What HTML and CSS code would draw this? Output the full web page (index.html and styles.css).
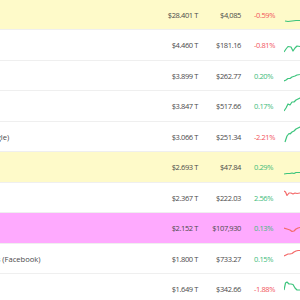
FILE: index.html
```html
<!DOCTYPE html>
<html>
<head>
<meta charset="utf-8">
<link rel="stylesheet" href="styles.css">
</head>
<body>
<div class="table">
  <div class="row hl-gold">
    <div class="name">Gold</div>
    <div class="cap">$28.401 T</div>
    <div class="price">$4,085</div>
    <div class="chg down">-0.59%</div>
    <svg class="spark" viewBox="0 0 60 30"><polyline class="up" points="1,21 4,21.5 8,21 12,20.5 16,20.5 20,20"/></svg>
  </div>
  <div class="row">
    <div class="name">NVIDIA</div>
    <div class="cap">$4.460 T</div>
    <div class="price">$181.16</div>
    <div class="chg down">-0.81%</div>
    <svg class="spark" viewBox="0 0 60 30"><polyline class="up" points="0,22 2,19 4,16.5 7,17 9,21 11,18 13,16 16,16.5 20,15"/></svg>
  </div>
  <div class="row">
    <div class="name">Apple</div>
    <div class="cap">$3.899 T</div>
    <div class="price">$262.77</div>
    <div class="chg up">0.20%</div>
    <svg class="spark" viewBox="0 0 60 30"><polyline class="up" points="0,20 2,19 4,17.5 6,17.5 8,16 11,15 13,14 16,13.5 20,12"/></svg>
  </div>
  <div class="row">
    <div class="name">Microsoft</div>
    <div class="cap">$3.847 T</div>
    <div class="price">$517.66</div>
    <div class="chg up">0.17%</div>
    <svg class="spark" viewBox="0 0 60 30"><polyline class="up" points="0,20 2,17 4,13 6,14 8,11 10,11 12,9 14,8 16,7 20,6"/></svg>
  </div>
  <div class="row">
    <div class="name">Alphabet (Google)</div>
    <div class="cap">$3.066 T</div>
    <div class="price">$251.34</div>
    <div class="chg down">-2.21%</div>
    <svg class="spark" viewBox="0 0 60 30"><polyline class="up" points="1,20 3,14 5,11.5 6,12 8,10 10,9 12,7 14,6 16,5 20,4"/></svg>
  </div>
  <div class="row hl-gold">
    <div class="name">Silver</div>
    <div class="cap">$2.693 T</div>
    <div class="price">$47.84</div>
    <div class="chg up">0.29%</div>
    <svg class="spark" viewBox="0 0 60 30"><polyline class="up" points="0,22 3,21.5 6,21.5 8,21 10,21.5 12,20.5 16,20.5 20,20"/></svg>
  </div>
  <div class="row">
    <div class="name">Amazon</div>
    <div class="cap">$2.367 T</div>
    <div class="price">$222.03</div>
    <div class="chg up">2.56%</div>
    <svg class="spark" viewBox="0 0 60 30"><polyline class="down" points="0,8 1.5,9 3,12.5 5,10 7,10 9,11 11,10 13,10.5 16,10 20,10"/></svg>
  </div>
  <div class="row hl-btc">
    <div class="name">Bitcoin</div>
    <div class="cap">$2.152 T</div>
    <div class="price">$107,930</div>
    <div class="chg up">0.13%</div>
    <svg class="spark" viewBox="0 0 60 30"><polyline class="down" points="0,15 3,16 6,17 8,18.5 10,18 12,16 14,15 16,14.5 20,14"/></svg>
  </div>
  <div class="row">
    <div class="name">Meta Platforms (Facebook)</div>
    <div class="cap">$1.800 T</div>
    <div class="price">$733.27</div>
    <div class="chg up">0.15%</div>
    <svg class="spark" viewBox="0 0 60 30"><polyline class="down" points="0,12 2,11 4,10 6,10 8,9.5 10,8 12,7 14,6.5 16,6.5 20,6"/></svg>
  </div>
  <div class="row">
    <div class="name">Broadcom</div>
    <div class="cap">$1.649 T</div>
    <div class="price">$342.66</div>
    <div class="chg down">-1.88%</div>
    <svg class="spark" viewBox="0 0 60 30"><polyline class="up" points="0,16 1.5,9 3,8 5,10 7,10 9,10.5 11,14 13,16 16,16 20,16"/></svg>
  </div>
</div>
</body>
</html>
```
FILE: styles.css
```css
html, body {
  margin: 0;
  padding: 0;
  background: #fff;
  overflow: hidden;
}
.table {
  margin-top: -0.5px;
  margin-left: -54px;
  width: 420px;
  font-family: "Open Sans", "Liberation Sans", sans-serif;
  color: #4a4a4a;
}
.row {
  display: grid;
  grid-template-columns: 204px 48px 43px 13px 30px 60px;
  height: 30.5px;
  box-sizing: border-box;
  border-bottom: 1px solid #efefef;
  align-items: center;
  font-size: 7.5px;
}
.hl-gold { background: #fefac9; }
.hl-btc { background: #feaafe; }
.name {
  font-size: 7.6px;
  white-space: nowrap;
}
.cap, .price, .chg {
  letter-spacing: -0.4px;
  white-space: nowrap;
}
.cap, .price {
  text-align: right;
}
.chg {
  grid-column: 5;
}
.chg.up { color: #3dbb7a; }
.chg.down { color: #f2545b; }
.spark {
  grid-column: 6;
  width: 60px;
  height: 30px;
  align-self: start;
}
.spark polyline {
  fill: none;
  stroke-width: 1.2;
  stroke-linejoin: round;
}
.spark .up { stroke: #3cc47c; }
.spark .down { stroke: #f46a6a; }
```
